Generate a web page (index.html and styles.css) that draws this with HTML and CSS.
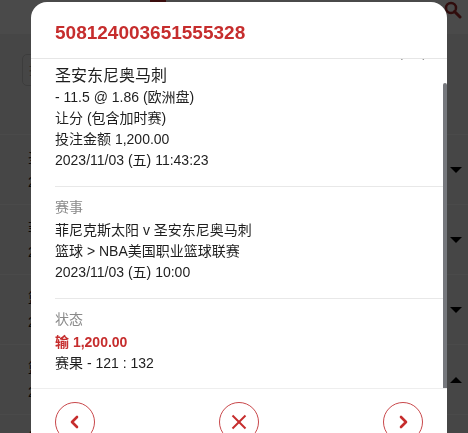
FILE: index.html
```html
<!DOCTYPE html>
<html lang="zh-CN">
<head>
    <meta charset="UTF-8">
    <meta name="viewport" content="width=device-width, initial-scale=1.0">
    <title>注单详情</title>
    <link rel="stylesheet" href="styles.css">
</head>
<body>
    <div class="page">
        <div class="topbar">
            <span class="tab-mark"></span>
            <svg class="search-icon" width="18" height="18" viewBox="0 0 18 18">
                <circle cx="7" cy="7" r="5" fill="none" stroke="#a52a2a" stroke-width="2.5"/>
                <line x1="10.5" y1="10.5" x2="16" y2="16" stroke="#a52a2a" stroke-width="3" stroke-linecap="round"/>
            </svg>
        </div>
        <div class="search-row">
            <div class="search-box">搜索</div>
        </div>
        <ul class="bet-list">
            <li><div class="row-text">圣安东尼奥马刺<br>2023/11/03</div><span class="caret"></span></li>
            <li><div class="row-text">菲尼克斯太阳<br>2023/11/03</div><span class="caret"></span></li>
            <li><div class="row-text">篮球<br>2023/11/03</div><span class="caret"></span></li>
            <li><div class="row-text">篮球<br>2023/11/02</div><span class="caret up"></span></li>
            <li><div class="row-text">篮球<br>2023/11/02</div><span class="caret"></span></li>
        </ul>
    </div>

    <div class="overlay">
        <div class="modal">
            <div class="modal-header">508124003651555328</div>
            <div class="modal-body">
                <div class="section">
                    <div class="label-row">
                        <span class="label">投注</span>
                        <span class="label">(1/1)</span>
                    </div>
                    <div class="team">圣安东尼奥马刺</div>
                    <div class="line">- 11.5 @ 1.86 (欧洲盘)</div>
                    <div class="line">让分 (包含加时赛)</div>
                    <div class="line">投注金额 1,200.00</div>
                    <div class="line">2023/11/03 (五) 11:43:23</div>
                </div>
                <div class="section">
                    <div class="label-row"><span class="label">赛事</span></div>
                    <div class="line">菲尼克斯太阳 v 圣安东尼奥马刺</div>
                    <div class="line">篮球 &gt; NBA美国职业篮球联赛</div>
                    <div class="line">2023/11/03 (五) 10:00</div>
                </div>
                <div class="section last">
                    <div class="label-row"><span class="label">状态</span></div>
                    <div class="line lose">输 1,200.00</div>
                    <div class="line">赛果 - 121 : 132</div>
                </div>
            </div>
            <div class="scroll-thumb"></div>
            <div class="modal-footer">
                <button class="circle-btn" aria-label="上一个">
                    <svg width="16" height="16" viewBox="0 0 16 16">
                        <polyline points="10,3 5,8 10,13" fill="none" stroke="#c62d2d" stroke-width="2.6" stroke-linecap="round" stroke-linejoin="round"/>
                    </svg>
                </button>
                <button class="circle-btn" aria-label="关闭">
                    <svg width="16" height="16" viewBox="0 0 16 16">
                        <line x1="1.5" y1="1.5" x2="14.5" y2="14.5" stroke="#c62d2d" stroke-width="2"/>
                        <line x1="14.5" y1="1.5" x2="1.5" y2="14.5" stroke="#c62d2d" stroke-width="2"/>
                    </svg>
                </button>
                <button class="circle-btn" aria-label="下一个">
                    <svg width="16" height="16" viewBox="0 0 16 16">
                        <polyline points="6,3 11,8 6,13" fill="none" stroke="#c62d2d" stroke-width="2.6" stroke-linecap="round" stroke-linejoin="round"/>
                    </svg>
                </button>
            </div>
        </div>
    </div>

    <script>
        // open the detail scrolled to the end, like the captured state
        const detailBody = document.querySelector('.modal-body');
        detailBody.scrollTop = detailBody.scrollHeight;
    </script>
</body>
</html>
```

FILE: styles.css
```css
html, body {
    margin: 0;
    padding: 0;
    height: 100%;
    overflow: hidden;
}
body {
    font-family: "Liberation Sans", Arial, "Noto Sans CJK SC", sans-serif;
    background-color: #f2f2f2;
    color: #1e1e1e;
}
.page {
    width: 468px;
}
.topbar {
    height: 34px;
    background-color: #fff;
    border-bottom: 1px solid #fff;
    display: flex;
    justify-content: space-between;
    align-items: flex-start;
    padding: 0 6px 0 150px;
    box-sizing: border-box;
}
.tab-mark {
    width: 16px;
    height: 3px;
    background-color: #c62d2d;
}
.search-icon {
    margin-top: 1px;
}
.search-row {
    height: 101px;
    padding: 20px 0 0 22px;
    box-sizing: border-box;
    border-bottom: 1px solid #fff;
}
.search-box {
    width: 400px;
    height: 30px;
    border: 1px solid #cfcfcf;
    border-radius: 5px;
    font-size: 13px;
    line-height: 30px;
    padding-left: 6px;
    color: #999;
}
.bet-list {
    list-style: none;
    margin: 0;
    padding: 0;
}
.bet-list li {
    height: 69px;
    border-bottom: 1px solid #fff;
    display: flex;
    justify-content: space-between;
    align-items: center;
    padding: 0 6px 0 28px;
}
.row-text {
    font-size: 14px;
    line-height: 24px;
}
.caret {
    width: 0;
    height: 0;
    border-left: 6px solid transparent;
    border-right: 6px solid transparent;
    border-top: 6px solid #000;
}
.caret.up {
    border-top: none;
    border-bottom: 6px solid #000;
}

.overlay {
    position: fixed;
    inset: 0;
    background-color: rgba(0, 0, 0, 0.71);
}
.modal {
    position: relative;
    width: 416px;
    margin: 2px 0 0 31px;
    background-color: #fff;
    border-radius: 16px;
    overflow: hidden;
}
.modal-header {
    padding: 20px 24px 14px;
    font-size: 19px;
    line-height: 22px;
    font-weight: bold;
    color: #c62d2d;
    border-bottom: 1px solid #e6e6e6;
}
.modal-body {
    height: 329px;
    overflow: hidden;
}
.scroll-thumb {
    position: absolute;
    top: 81px;
    right: 0;
    width: 4px;
    height: 305px;
    border-radius: 2px 2px 0 0;
    background-color: #76787d;
}
.section {
    margin-left: 24px;
    padding: 10px 20px 15px 0;
    border-bottom: 1px solid #e8e8e8;
    font-size: 14px;
    line-height: 21px;
}
.section.last {
    border-bottom: none;
    padding-bottom: 14px;
}
.label-row {
    display: flex;
    justify-content: space-between;
    margin-bottom: 2px;
}
.label {
    color: #8a8a8a;
}
.team {
    font-size: 16px;
    line-height: 22px;
}
.lose {
    color: #c62d2d;
    font-weight: bold;
}
.modal-footer {
    border-top: 1px solid #eee;
    padding: 13px 24px;
    display: flex;
    justify-content: space-between;
}
.circle-btn {
    width: 40px;
    height: 40px;
    border-radius: 50%;
    border: 1px solid #c8474a;
    background-color: #fff;
    padding: 0;
    display: flex;
    align-items: center;
    justify-content: center;
}
```
